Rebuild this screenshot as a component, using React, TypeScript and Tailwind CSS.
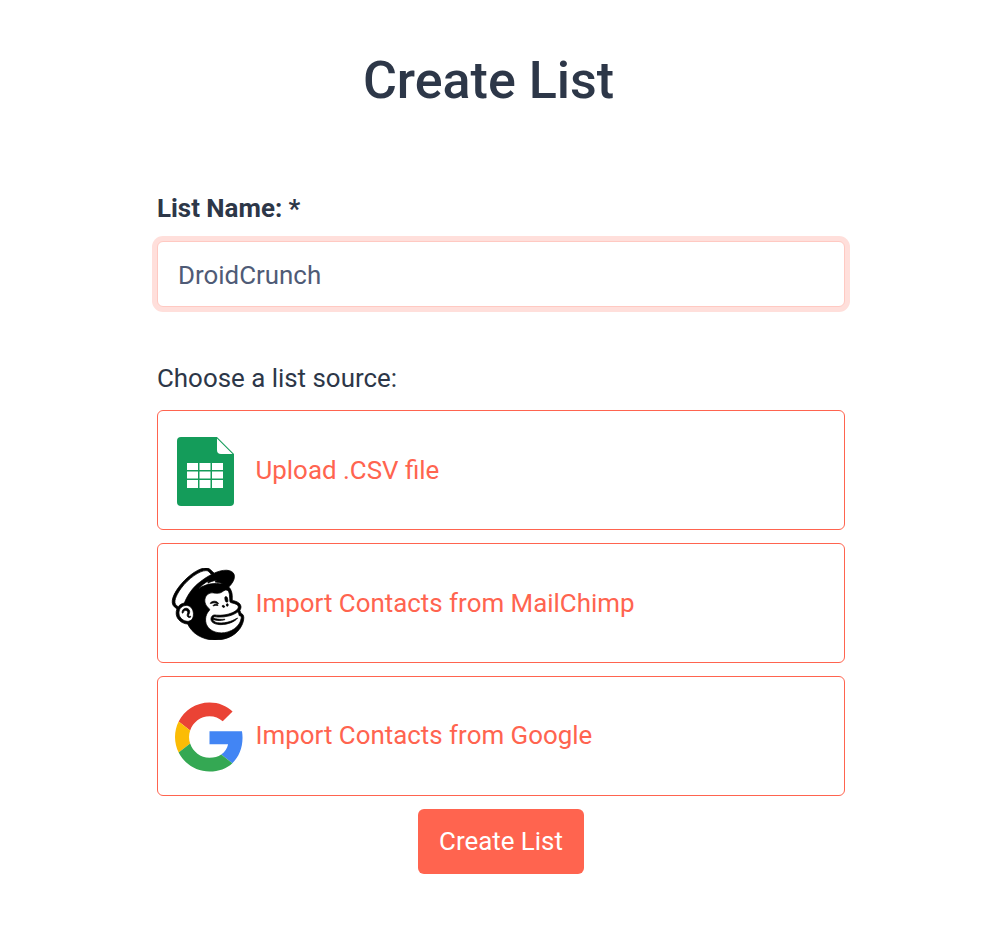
import { SiMailchimp } from 'react-icons/si';

function SheetsIcon() {
  return (
    <svg width="57" height="69" viewBox="0 0 57 69" className="mt-[2px] shrink-0">
      <path d="M4 0H40L57 17V65a4 4 0 0 1-4 4H4a4 4 0 0 1-4-4V4a4 4 0 0 1 4-4z" fill="#149c5a" />
      <path d="M40 1.5L55.5 17H44a4 4 0 0 1-4-4z" fill="#fff" />
      <path d="M10 26h11v7H10zM22.5 26h11v7H22.5zM35 26h11v7H35zM10 34.5h11v7H10zM22.5 34.5h11v7H22.5zM35 34.5h11v7H35zM10 43h11v8H10zM22.5 43h11v8H22.5zM35 43h11v8H35z" fill="#fff" />
    </svg>
  );
}

function GoogleIcon() {
  return (
    <svg width="69" height="70" viewBox="0 0 48 48" className="mt-[2px] shrink-0">
      <path fill="#EA4335" d="M24 9.5c3.54 0 6.71 1.22 9.21 3.6l6.85-6.85C35.9 2.38 30.47 0 24 0 14.62 0 6.51 5.38 2.56 13.22l7.98 6.19C12.43 13.72 17.74 9.5 24 9.5z" />
      <path fill="#4285F4" d="M46.98 24.55c0-1.57-.15-3.09-.38-4.55H24v9.02h12.94c-.58 2.96-2.26 5.48-4.78 7.18l7.73 6c4.51-4.18 7.09-10.36 7.09-17.65z" />
      <path fill="#FBBC05" d="M10.53 28.59c-.48-1.45-.76-2.99-.76-4.59s.27-3.14.76-4.59l-7.98-6.19C.92 16.46 0 20.12 0 24c0 3.88.92 7.54 2.56 10.78l7.97-6.19z" />
      <path fill="#34A853" d="M24 48c6.48 0 11.93-2.13 15.89-5.81l-7.73-6c-2.15 1.45-4.92 2.3-8.16 2.3-6.26 0-11.57-4.22-13.47-9.91l-7.98 6.19C6.51 42.62 14.62 48 24 48z" />
    </svg>
  );
}

export default function App() {
  return (
    <div className="h-[942px] bg-white font-['Roboto',sans-serif] text-[#2d3748]">
      <h1 className="w-[977px] pt-[47px] text-center text-[52px] leading-[67px] font-medium">Create List</h1>

      <div className="ml-[157px] mt-[76px] w-[688px]">
        <label className="block text-[25.9px] leading-[36px] font-bold">List Name: *</label>
        <div className="mt-[15px] flex h-[66px] items-center rounded-md border border-[#ffc9c2] bg-white pt-[2px] pl-[20px] text-[25.9px] text-[#4f5b76] ring-[5px] ring-[#ffdfdb]">
          DroidCrunch
        </div>

        <p className="mt-[53px] text-[25.9px] leading-[36px]">Choose a list source:</p>

        <div className="mt-[14px] flex flex-col gap-[13px] text-[25.9px] text-[#ff644f]">
          <a className="flex h-[120px] items-center rounded-md border border-[#ff644f] pl-[19px]">
            <SheetsIcon />
            <span className="ml-[21.5px]">Upload .CSV file</span>
          </a>
          <a className="flex h-[120px] items-center rounded-md border border-[#ff644f] pl-[12px]">
            <SiMailchimp preserveAspectRatio="none" className="mt-[2px] h-[72px] w-[76px] shrink-0 stroke-black stroke-[0.25px] text-black" />
            <span className="ml-[9.5px]">Import Contacts from MailChimp</span>
          </a>
          <a className="flex h-[120px] items-center rounded-md border border-[#ff644f] pl-[17px]">
            <GoogleIcon />
            <span className="ml-[11.5px] -translate-y-px">Import Contacts from Google</span>
          </a>
        </div>

        <div className="mt-[13px] flex justify-center">
          <button className="h-[65px] w-[166px] rounded-md bg-[#ff644f] text-[25.9px] text-white">Create List</button>
        </div>
      </div>
    </div>
  );
}
